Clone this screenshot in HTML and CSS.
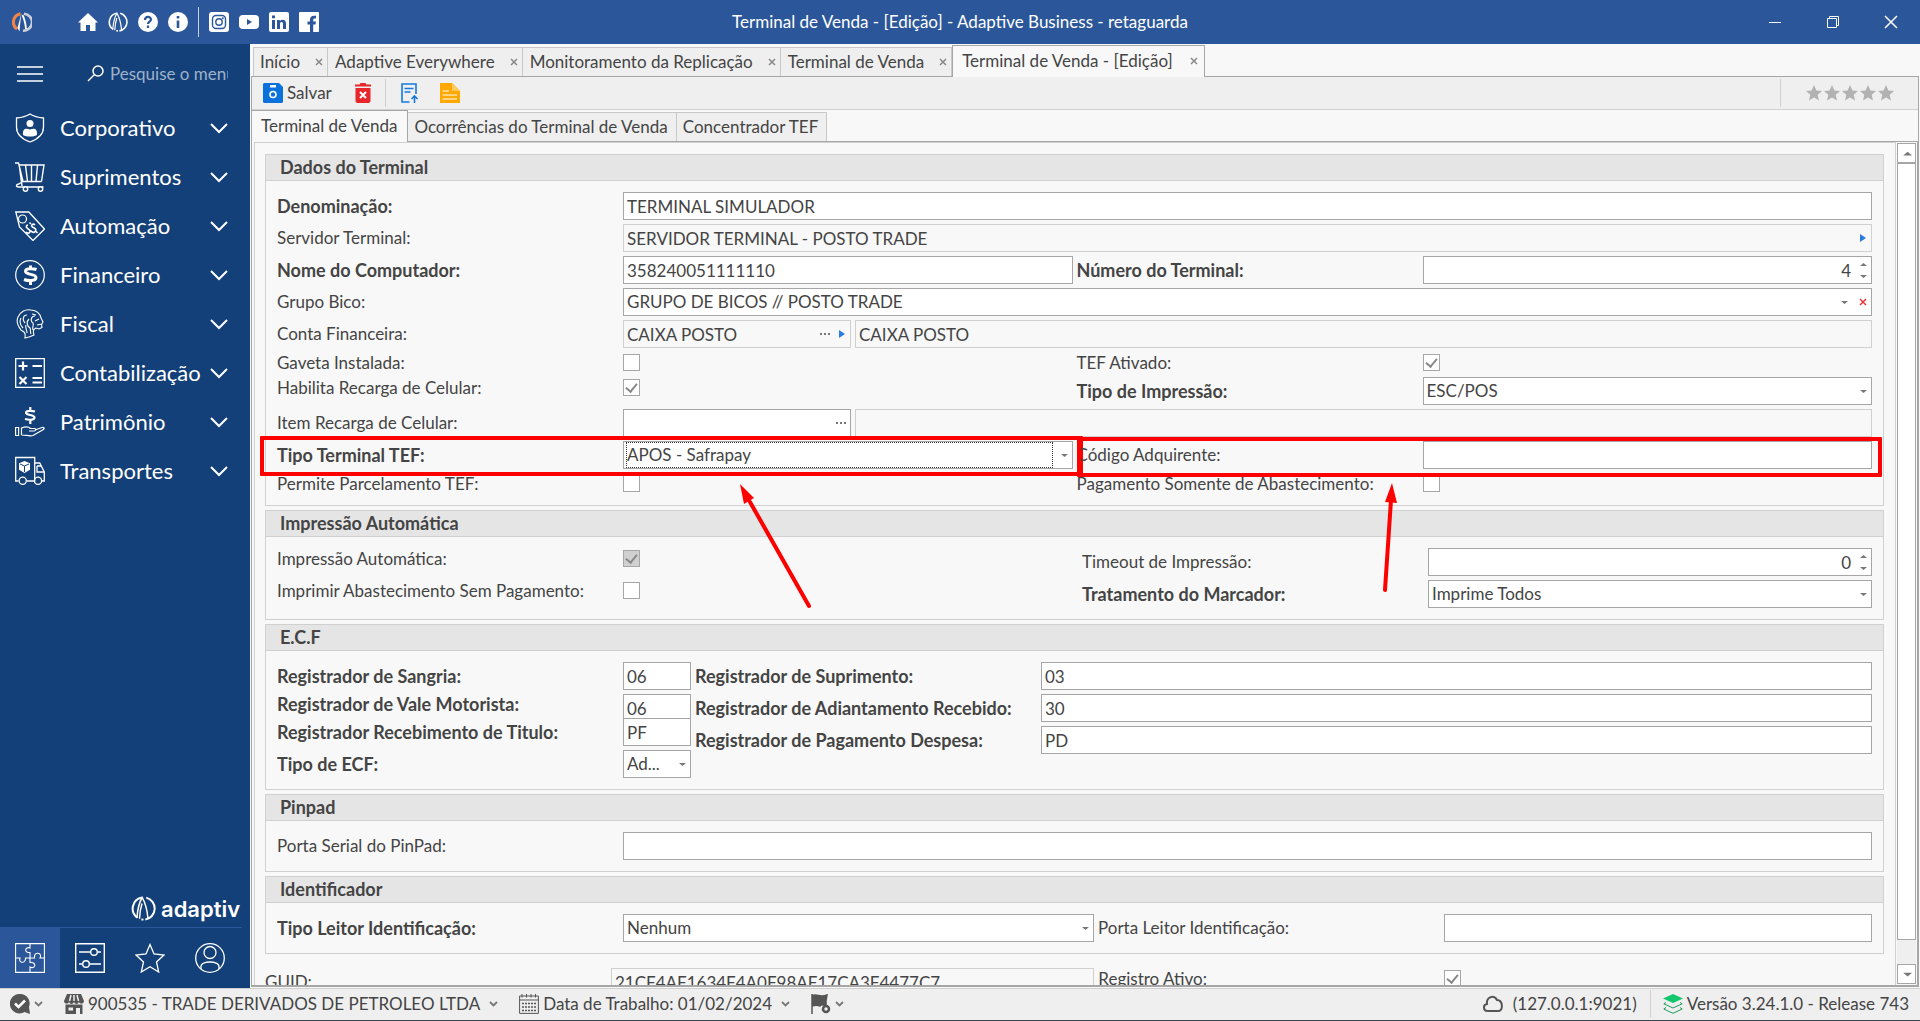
FILE: index.html
```html
<!DOCTYPE html>
<html lang="pt-BR">
<head>
  <meta charset="UTF-8">
  <meta name="viewport" content="width=device-width, initial-scale=1.0">
  <title>Terminal de Venda - [Edição] - Adaptive Business - retaguarda</title>
  <link rel="stylesheet" href="styles.css">
</head>
<body>

<!-- Shared icons -->
<svg class="sprite" aria-hidden="true">
  <symbol id="logo" viewBox="0 0 20 20">
    <path d="M8.6 1.2A9 9 0 0 0 5.2 17.4M12.2 1.3A9 9 0 0 1 11.4 18.9M8.3 18.8L10 18.9" fill="none" stroke="currentColor" stroke-width="1.6"/>
    <path d="M4.8 17.5C5.2 11 6.6 5 9 1.2C11.4 5.5 13 11.500 13.600 18M8.800 6C7.800 9 7 13 6.800 18.200" fill="none" stroke="currentColor" stroke-width="1.200"/>
  </symbol>
  <symbol id="chevron" viewBox="0 0 18 12"><path d="M1 2l8 8 8-8" fill="none" stroke="currentColor" stroke-width="2"/></symbol>
  <symbol id="mini" viewBox="0 0 9 6"><path d="M1 1l3.500 3.500L8 1" fill="none" stroke="currentColor" stroke-width="1.800"/></symbol>
  <symbol id="down" viewBox="0 0 8 8"><path d="M1 3h7L4.500 6z" fill="currentColor"/></symbol>
  <symbol id="up" viewBox="0 0 8 8"><path d="M1 6h7L4.500 3z" fill="currentColor"/></symbol>
  <symbol id="right" viewBox="0 0 8 8"><path d="M1 0v8l6-4z" fill="currentColor"/></symbol>
  <symbol id="x" viewBox="0 0 8 8"><path d="M1 1l6 6M7 1L1 7" stroke="currentColor" stroke-width="1.500"/></symbol>
  <symbol id="dots" viewBox="0 0 10 8"><path d="M0 3h2v2H0zM4 3h2v2H4zM8 3h2v2H8z" fill="currentColor"/></symbol>
  <symbol id="star" viewBox="0 0 16 16"><path d="M8 0l2.400 5.400 5.600.5-4.300 3.800L13 15.500 8 12.500 3 15.500l1.300-5.800L0 5.900l5.600-.5z" fill="currentColor"/></symbol>
</svg>

<header class="titlebar">
  <svg class="app-logo" viewBox="0 0 20 20"><path d="M8.500 1.700A8.500 8.500 0 0 0 5 17" fill="none" stroke="#f58345" stroke-width="3"/><path d="M9.500 1L5.500 16l2 3.500C8 13 8.500 8 9.500 1z" fill="#fff"/><path d="M12 1.700a8.500 8.500 0 0 1-1 17" fill="none" stroke="#c9cfda" stroke-width="2.600"/><path d="M10.500 3c2 4 3 9 3.500 14" fill="none" stroke="#fff" stroke-width="1.800"/></svg>
  <nav class="quick-links">
    <a href="#" title="Home"><svg viewBox="0 0 20 20"><path d="M10 1l10 9.500h-2.500V19H12v-6H8v6H2.500v-8.500H0z" fill="#fff"/></svg></a>
    <a href="#" title="Adaptive"><svg><use href="#logo"/></svg></a>
    <a href="#" title="Ajuda"><svg viewBox="0 0 20 20"><circle cx="10" cy="10" r="10" fill="#fff"/><path d="M7 8c0-4 6-4 6-.5 0 2.200-3 2-3 4.500M10 13.500v2.500" fill="none" stroke="#2b579a" stroke-width="2.200"/></svg></a>
    <a href="#" title="Sobre"><svg viewBox="0 0 20 20"><circle cx="10" cy="10" r="10" fill="#fff"/><path d="M10 4v2.500M10 8.500V16" stroke="#2b579a" stroke-width="2.600"/></svg></a>
    <span class="divider"></span>
    <a href="#" title="Instagram"><svg viewBox="0 0 20 20"><rect width="20" height="20" rx="3" fill="#fff"/><rect x="3.500" y="3.500" width="13" height="13" rx="3.500" fill="none" stroke="#2b579a" stroke-width="1.400"/><circle cx="10" cy="10" r="3.200" fill="none" stroke="#2b579a" stroke-width="1.400"/><circle cx="13.800" cy="6.200" r="1" fill="#2b579a"/></svg></a>
    <a href="#" title="YouTube"><svg viewBox="0 0 20 20"><rect y="3" width="20" height="14" rx="4" fill="#fff"/><path d="M8 7v6l5-3z" fill="#2b579a"/></svg></a>
    <a href="#" title="LinkedIn"><svg viewBox="0 0 20 20"><rect width="20" height="20" rx="2" fill="#fff"/><path d="M3 8h3v9H3zM3 3.500h3v2.700H3zM8 8h2.800v1.300C12.200 7 17 7.200 17 11.500V17h-3v-5c0-2.600-3-2.400-3 0v5H8z" fill="#2b579a"/></svg></a>
    <a href="#" title="Facebook"><svg viewBox="0 0 20 20"><rect width="20" height="20" rx="1" fill="#fff"/><path d="M11 20v-7.500H8.500v-3H11V7.500C11 4.500 13 3.300 17 3.800v2.700c-2-.1-2.800.1-2.800 1.500v1.500H17l-.5 3h-2.300V20z" fill="#2b579a"/></svg></a>
  </nav>
  <h1>Terminal de Venda - [Edição] - Adaptive Business - retaguarda</h1>
  <div class="window-buttons">
    <button title="Minimizar"><svg viewBox="0 0 14 14"><path d="M1 7.500h12" stroke="#fff"/></svg></button>
    <button title="Restaurar"><svg viewBox="0 0 14 14"><path d="M1.500 3.500h9v9h-9zM3.500 3V1.500h9v9H11" fill="none" stroke="#fff"/></svg></button>
    <button title="Fechar"><svg viewBox="0 0 14 14"><path d="M1 1l12 12M13 1L1 13" stroke="#fff" stroke-width="1.500"/></svg></button>
  </div>
</header>

<div class="workspace">
  <aside class="sidebar">
    <div class="sidebar-top">
      <button class="burger" title="Menu"><svg viewBox="0 0 26 16"><path d="M0 1h26M0 8h26M0 15h26" stroke="#fff" stroke-width="1.300"/></svg></button>
      <svg class="lens" viewBox="0 0 17 17"><circle cx="11" cy="6" r="5" fill="none" stroke="#fff" stroke-width="1.500"/><path d="M7.500 9.500L1 16" stroke="#fff" stroke-width="1.500"/></svg>
      <input type="text" placeholder="Pesquise o menu" aria-label="Pesquise o menu">
    </div>
    <nav class="menu">
      <button><svg viewBox="0 0 30 30"><path d="M15 1c4 2.500 8 3.500 13.500 4v9c0 7-5 12-13.500 15C6.500 26 1.500 21 1.500 14V5C7 4.500 11 3.500 15 1z" fill="none" stroke="#fff" stroke-width="1.300"/><circle cx="15" cy="10.500" r="3.500" fill="#fff"/><path d="M8 22c-.5-7 3-7 7-5.500 4-1.500 7.500-1.500 7 5.500-4 2-10 2-14 0z" fill="#fff"/></svg><span>Corporativo</span><svg class="chev"><use href="#chevron"/></svg></button>
      <button><svg viewBox="0 0 30 30"><path d="M0 1h3.500L8 19.500h18.500M3.800 3H29l-2.500 16.500M4.500 5L7 24M8 19.500L3.500 22c-3 1-2.500 3 0 3h25M10.500 3l2 16.500M16.500 3v16.500M22.500 3l-1.500 16.500" fill="none" stroke="#fff" stroke-width="1.400"/><circle cx="10.500" cy="27" r="2.200" fill="#134078" stroke="#fff" stroke-width="1.400"/><circle cx="25.500" cy="27" r="2.200" fill="#134078" stroke="#fff" stroke-width="1.400"/></svg><span>Suprimentos</span><svg class="chev"><use href="#chevron"/></svg></button>
      <button><svg viewBox="0 0 30 30"><path d="M.8 1h13L29.500 18 18 29.500 4.500 16z" fill="none" stroke="#fff" stroke-width="1.300"/><circle cx="7.500" cy="8" r="4" fill="none" stroke="#fff" stroke-width="1.200"/><path d="M20 14c-2-2-4 0-3 1.500s5 2 3.500 4.500-4 1-4.500-.5M16 13l-1.500-1.500M20.500 20l2 2M13 14c-2 0-2 2-1 3s4 2 3 4-3 1-4 0" fill="none" stroke="#fff" stroke-width="1.600"/></svg><span>Automação</span><svg class="chev"><use href="#chevron"/></svg></button>
      <button><svg viewBox="0 0 30 30"><circle cx="15" cy="15" r="14.300" fill="none" stroke="#fff" stroke-width="1.200"/><path d="M21.500 9.500c-2-.8-11-2-11 1.700 0 4 10.500 2.300 10.500 6.300 0 4-8 3.500-12 2M15.500 5.500v4M15.500 20v5" fill="none" stroke="#fff" stroke-width="3"/></svg><span>Financeiro</span><svg class="chev"><use href="#chevron"/></svg></button>
      <button><svg viewBox="0 0 30 30"><path d="M6 21c-3-4-5-9-3-13C5 3 10 0 16 1c5 .5 9 3 10 8l2 4-1.500 2.500.5 3-3 1.500-3-1c-3 1-3 4-2 7-2 1-4 2-9 3 0-3 1-4-1-6zM20 7c-4 0-5 5-2 7 1 2-1 4 0 7M10 14c-3-3-2-8 2-8M6 9c-2 4 0 8 2 10M14 10c-3 3-2 7 1 9 1 2 0 4 1 6M11 16c-1 3 1 5 1 8M17 5l4 1M24 10l-4 2M27 15l-5 1" fill="none" stroke="#fff" stroke-width="1.100"/></svg><span>Fiscal</span><svg class="chev"><use href="#chevron"/></svg></button>
      <button><svg viewBox="0 0 30 30"><path d="M.7.700h28.600v28.600H.7z" fill="none" stroke="#fff" stroke-width="1.300"/><path d="M3.500 8h9M8 3.500v9M17.500 8H27M17.500 20H27M17.500 24.500H27M4.500 19l7 7M11.500 19l-7 7" stroke="#fff" stroke-width="2.200"/></svg><span>Contabilização</span><svg class="chev"><use href="#chevron"/></svg></button>
      <button><svg viewBox="0 0 30 30"><path d="M20 4.500c-2-.6-9-1.500-9 1.200 0 3 8.500 1.600 8.500 4.800 0 3-6 2.500-9.500 1.500M15.300 0v3.500M15.300 13v4" fill="none" stroke="#fff" stroke-width="2.200"/><path d="M.6 20.500h3v8h-3zM6.500 28V21c4-1.500 7-1.500 9 .5h4c2 0 1.500 2.500-.5 2.500h-5M20 23l7-2.500c2-.5 3 1 1 2.200L18 28.500c-3 1-7-.5-11.500-.5" fill="none" stroke="#fff" stroke-width="1.200"/></svg><span>Patrimônio</span><svg class="chev"><use href="#chevron"/></svg></button>
      <button><svg viewBox="0 0 30 30"><path d="M3.500 25H.7V1.500h19V25H12M19.700 7h5l4.600 9v9H27M20 25h-1M22 10v6h7.300M22 10h4" fill="none" stroke="#fff" stroke-width="1.300"/><circle cx="7.700" cy="24.800" r="3.600" fill="none" stroke="#fff" stroke-width="1.300"/><circle cx="23" cy="24.800" r="3.600" fill="none" stroke="#fff" stroke-width="1.300"/><path d="M9.500 5l5.500 2.200v6.500L9.500 17 4 13.700V7.200z" fill="#fff"/><path d="M5 8l4.500 2L14 8M9.500 10v6" fill="none" stroke="#134078"/></svg><span>Transportes</span><svg class="chev"><use href="#chevron"/></svg></button>
    </nav>
    <div class="brand"><svg><use href="#logo"/></svg><span>adaptiv</span></div>
    <div class="side-tabs">
      <button class="active" title="Módulos"><svg viewBox="0 0 30 30"><path d="M.6.600h28.800v28.800H.6zM15 .6V5c-5-2-6 5-1 4.500h1V15M.6 15H5c-2 5 5 6 5.500 1v-1H15M15 15v4.500h1c5-.5 5 6 0 5l-1-.5v5.400M15 15h4.500v-1c-.5-5 7-5 6 0l-.5 1h4.400" fill="none" stroke="#fff" stroke-width="1.100"/></svg></button>
      <button title="Configurações"><svg viewBox="0 0 30 30"><path d="M.7.700h28.600v28.600H.7zM4 9h11.500M22.500 9H26M4 21h3.500M14.500 21H26" fill="none" stroke="#fff" stroke-width="1.400"/><circle cx="19" cy="9" r="3.300" fill="none" stroke="#fff" stroke-width="1.400"/><circle cx="11" cy="21" r="3.300" fill="none" stroke="#fff" stroke-width="1.400"/></svg></button>
      <button title="Favoritos"><svg viewBox="0 0 30 30"><path d="M15 1.500l4 9.500 10 1-7.500 7 2.200 10L15 23.800 6.300 29l2.200-10L1 12l10-1z" fill="none" stroke="#fff" stroke-width="1.300"/></svg></button>
      <button title="Usuário"><svg viewBox="0 0 30 30"><circle cx="15" cy="15" r="14.300" fill="none" stroke="#fff" stroke-width="1.300"/><circle cx="15" cy="9.500" r="6" fill="none" stroke="#fff" stroke-width="1.300"/><path d="M6 26v-2.500c0-6 18-6 18 0V26" fill="none" stroke="#fff" stroke-width="1.300"/></svg></button>
    </div>
  </aside>

  <main class="main">
    <div class="tabs">
      <div class="tab"><a href="#">Início</a><button title="Fechar"><svg><use href="#x"/></svg></button></div>
      <div class="tab"><a href="#">Adaptive Everywhere</a><button title="Fechar"><svg><use href="#x"/></svg></button></div>
      <div class="tab"><a href="#">Monitoramento da Replicação</a><button title="Fechar"><svg><use href="#x"/></svg></button></div>
      <div class="tab"><a href="#">Terminal de Venda</a><button title="Fechar"><svg><use href="#x"/></svg></button></div>
      <div class="tab active"><a href="#">Terminal de Venda - [Edição]</a><button title="Fechar"><svg><use href="#x"/></svg></button></div>
    </div>

    <div class="document">
      <div class="toolbar">
        <button><svg viewBox="0 0 20 20"><path d="M1 0h15l4 4v15l-1 1H1l-1-1V1z" fill="#0b72dc"/><path d="M7 2h6v2.500H7z" fill="#fff"/><circle cx="10" cy="11.500" r="3" fill="none" stroke="#fff" stroke-width="1.600"/></svg>Salvar</button>
        <button title="Excluir"><svg viewBox="0 0 20 20"><path d="M2 1.500h4.500L7.500 0h5l1 1.500H18v2H2zM2.500 5h15v13.500L16 20H4l-1.500-1.500z" fill="#e8272b"/><path d="M7 9l6 6M13 9l-6 6" stroke="#fff" stroke-width="2"/></svg></button>
        <span class="divider"></span>
        <button title="Relatório"><svg viewBox="0 0 20 20"><path d="M10.500 19H3V1h14v10M5.500 5.500h9M5.500 9h6M15.500 20v-6.500M12.500 16l3-3 3 3" fill="none" stroke="#1679dc" stroke-width="1.600"/></svg></button>
        <button title="Notas"><svg viewBox="0 0 20 20"><path d="M0 0h12l8 8v12H0z" fill="#ffa800"/><path d="M12 0l8 8h-8z" fill="#ffc95c"/><path d="M2.500 8H9M2.500 12H17M2.500 16H17" stroke="#fff" stroke-width="1.200"/></svg></button>
        <div class="rating">
          <svg><use href="#star"/></svg><svg><use href="#star"/></svg><svg><use href="#star"/></svg><svg><use href="#star"/></svg><svg><use href="#star"/></svg>
        </div>
      </div>

      <div class="subtabs">
        <a href="#" class="active">Terminal de Venda</a>
        <a href="#">Ocorrências do Terminal de Venda</a>
        <a href="#">Concentrador TEF</a>
      </div>

      <div class="scroll-area">
        <form class="form">
          <section class="group">
            <h2>Dados do Terminal</h2>
            <div class="rows">
              <div class="row">
                <label class="req" for="denominacao">Denominação:</label>
                <div class="field"><input id="denominacao" type="text" value="TERMINAL SIMULADOR"></div>
              </div>
              <div class="row">
                <label for="servidor">Servidor Terminal:</label>
                <div class="field readonly"><input id="servidor" type="text" value="SERVIDOR TERMINAL - POSTO TRADE" readonly><svg class="go"><use href="#right"/></svg></div>
              </div>
              <div class="pair">
                <div class="row">
                  <label class="req" for="computador">Nome do Computador:</label>
                  <div class="field"><input id="computador" type="text" value="358240051111110"></div>
                </div>
                <div class="row">
                  <label class="req" for="numero">Número do Terminal:</label>
                  <div class="field number"><input id="numero" type="text" value="4"><span class="spin"><svg><use href="#up"/></svg><svg><use href="#down"/></svg></span></div>
                </div>
              </div>
              <div class="row">
                <label for="grupo">Grupo Bico:</label>
                <div class="field clearable">
                  <select id="grupo"><option>GRUPO DE BICOS // POSTO TRADE</option></select>
                  <svg><use href="#down"/></svg><svg class="clear"><use href="#x"/></svg>
                </div>
              </div>
              <div class="row">
                <label for="conta">Conta Financeira:</label>
                <div class="lookup">
                  <div class="field readonly"><input id="conta" type="text" value="CAIXA POSTO" readonly><svg class="dots"><use href="#dots"/></svg><svg class="go"><use href="#right"/></svg></div>
                  <div class="field readonly"><input type="text" value="CAIXA POSTO" readonly aria-label="Descrição da conta"></div>
                </div>
              </div>
              <div class="pair">
                <div class="row check">
                  <label for="gaveta">Gaveta Instalada:</label>
                  <input id="gaveta" type="checkbox">
                </div>
                <div class="row check">
                  <label for="tef">TEF Ativado:</label>
                  <input id="tef" type="checkbox" checked>
                </div>
                <div class="row check">
                  <label for="recarga">Habilita Recarga de Celular:</label>
                  <input id="recarga" type="checkbox" checked>
                </div>
                <div class="row">
                  <label class="req" for="impressao">Tipo de Impressão:</label>
                  <div class="field"><select id="impressao"><option>ESC/POS</option></select><svg><use href="#down"/></svg></div>
                </div>
              </div>
              <div class="row">
                <label for="item">Item Recarga de Celular:</label>
                <div class="lookup">
                  <div class="field"><input id="item" type="text"><svg class="dots"><use href="#dots"/></svg></div>
                  <div class="field readonly"><input type="text" readonly aria-label="Descrição do item"></div>
                </div>
              </div>
              <div class="pair">
                <div class="row marked">
                  <label class="req" for="tipo-tef">Tipo Terminal TEF:</label>
                  <div class="field"><select id="tipo-tef" class="focused"><option>APOS - Safrapay</option></select><svg><use href="#down"/></svg></div>
                  <span class="mark mark-left"></span>
                  <svg class="arrow arrow-left" viewBox="0 0 76 128"><path d="M71 124L12 20" stroke="#f00" stroke-width="4" stroke-linecap="round"/><path d="M2 2l14 14-10 6z" fill="#f00"/></svg>
                </div>
                <div class="row marked">
                  <label for="adquirente">Código Adquirente:</label>
                  <div class="field"><input id="adquirente" type="text"></div>
                  <span class="mark mark-right"></span>
                  <svg class="arrow arrow-right" viewBox="0 0 20 112"><path d="M6 108L12 18" stroke="#f00" stroke-width="4" stroke-linecap="round"/><path d="M13 1l5 20-12-1z" fill="#f00"/></svg>
                </div>
                <div class="row check">
                  <label for="parcelamento">Permite Parcelamento TEF:</label>
                  <input id="parcelamento" type="checkbox">
                </div>
                <div class="row check">
                  <label for="abastecimento">Pagamento Somente de Abastecimento:</label>
                  <input id="abastecimento" type="checkbox">
                </div>
              </div>
            </div>
          </section>

          <section class="group">
            <h2>Impressão Automática</h2>
            <div class="rows">
              <div class="pair printing">
                <div class="row check">
                  <label for="auto">Impressão Automática:</label>
                  <input id="auto" type="checkbox" checked disabled>
                </div>
                <div class="row">
                  <label for="timeout">Timeout de Impressão:</label>
                  <div class="field number"><input id="timeout" type="text" value="0"><span class="spin"><svg><use href="#up"/></svg><svg><use href="#down"/></svg></span></div>
                </div>
                <div class="row check">
                  <label for="sem-pagamento">Imprimir Abastecimento Sem Pagamento:</label>
                  <input id="sem-pagamento" type="checkbox">
                </div>
                <div class="row">
                  <label class="req" for="marcador">Tratamento do Marcador:</label>
                  <div class="field"><select id="marcador"><option>Imprime Todos</option></select><svg><use href="#down"/></svg></div>
                </div>
              </div>
            </div>
          </section>

          <section class="group">
            <h2>E.C.F</h2>
            <div class="ecf">
              <div class="rows">
                <div class="row">
                  <label class="req" for="sangria">Registrador de Sangria:</label>
                  <div class="field"><input id="sangria" type="text" value="06"></div>
                </div>
                <div class="row tight">
                  <label class="req" for="vale">Registrador de Vale Motorista:</label>
                  <div class="field"><input id="vale" type="text" value="06"></div>
                </div>
                <div class="row">
                  <label class="req" for="titulo">Registrador Recebimento de Titulo:</label>
                  <div class="field"><input id="titulo" type="text" value="PF"></div>
                </div>
                <div class="row">
                  <label class="req" for="ecf">Tipo de ECF:</label>
                  <div class="field"><select id="ecf"><option>Ad...</option></select><svg><use href="#down"/></svg></div>
                </div>
              </div>
              <div class="rows">
                <div class="row">
                  <label class="req" for="suprimento">Registrador de Suprimento:</label>
                  <div class="field"><input id="suprimento" type="text" value="03"></div>
                </div>
                <div class="row">
                  <label class="req" for="adiantamento">Registrador de Adiantamento Recebido:</label>
                  <div class="field"><input id="adiantamento" type="text" value="30"></div>
                </div>
                <div class="row">
                  <label class="req" for="despesa">Registrador de Pagamento Despesa:</label>
                  <div class="field"><input id="despesa" type="text" value="PD"></div>
                </div>
              </div>
            </div>
          </section>

          <section class="group">
            <h2>Pinpad</h2>
            <div class="rows">
              <div class="row">
                <label for="porta-pinpad">Porta Serial do PinPad:</label>
                <div class="field"><input id="porta-pinpad" type="text"></div>
              </div>
            </div>
          </section>

          <section class="group">
            <h2>Identificador</h2>
            <div class="rows">
              <div class="pair reader">
                <div class="row">
                  <label class="req" for="leitor">Tipo Leitor Identificação:</label>
                  <div class="field"><select id="leitor"><option>Nenhum</option></select><svg><use href="#down"/></svg></div>
                </div>
                <div class="row">
                  <label for="porta-leitor">Porta Leitor Identificação:</label>
                  <div class="field"><input id="porta-leitor" type="text"></div>
                </div>
              </div>
            </div>
          </section>

          <div class="pair footer-row">
            <div class="row">
              <label for="guid">GUID:</label>
              <div class="field readonly"><input id="guid" type="text" value="21CF4AF1634F4A0F98AF17CA3F4477C7" readonly></div>
            </div>
            <div class="row check">
              <label for="ativo">Registro Ativo:</label>
              <input id="ativo" type="checkbox" checked>
            </div>
          </div>
        </form>

        <div class="scrollbar">
          <button type="button" title="Subir"><svg viewBox="0 0 8 8"><use href="#up"/></svg></button>
          <div class="track"><div class="thumb"></div></div>
          <button type="button" title="Descer"><svg viewBox="0 0 8 8"><use href="#down"/></svg></button>
        </div>
      </div>
    </div>
  </main>
</div>

<footer class="statusbar">
  <button class="st-chat" title="Mensagens"><svg class="ico" viewBox="0 0 20 20"><path d="M10 0a9.500 9.500 0 0 1 9 13l1 7-5.500-2A9.700 9.700 0 1 1 10 0z" fill="#555"/><path d="M5 9.500l3.500 3.500L15 6.500" fill="none" stroke="#fff" stroke-width="2.500"/></svg><svg class="mini"><use href="#mini"/></svg></button>
  <button class="st-text"><svg class="ico" viewBox="0 0 20 20"><path d="M3 0h14l3 7c0 3-4 3.500-5 1-1 2.500-4 2.500-5 0-1 2.500-4 2.500-5 0-1 2.500-5 2-5-1z" fill="#555"/><path d="M7 1L5.500 7M13 1l1.500 6M10 1v6" stroke="#efefef" stroke-width="1.500"/><path d="M1.500 10.500h17V20H16v-6h-4v6H1.500z" fill="#555"/><path d="M4.500 13.500h4.500v3H4.500z" fill="#efefef"/></svg>900535 - TRADE DERIVADOS DE PETROLEO LTDA<svg class="mini"><use href="#mini"/></svg></button>
  <button class="st-text"><svg class="ico" viewBox="0 0 20 20"><path d="M.6 2h18.800v17.400H.6zM.6 6h18.800M3 0v3.500M7.500 0v3.500M12 0v3.500M16.500 0v3.500" fill="none" stroke="#555"/><path d="M3 9.500h14M3 13h14M3 16.500h14" stroke="#555" stroke-width="1.600" stroke-dasharray="2 1"/></svg>Data de Trabalho: 01/02/2024<svg class="mini"><use href="#mini"/></svg></button>
  <button class="st-flag" title="Idioma"><svg class="ico" viewBox="0 0 20 20"><path d="M1 0v20M1 2c5-3 7 2 15-1l-1 6v4H10l-1 1C6 11 4 11 1 12z" fill="#555" stroke="#555" stroke-width="1.500"/><circle cx="15" cy="15" r="3" fill="none" stroke="#555" stroke-width="2.500"/></svg><svg class="mini"><use href="#mini"/></svg></button>
  <div class="server"><svg class="cloud" viewBox="0 0 20 18"><path d="M4.500 16C0 16-.2 9.500 4 9c-1-7 7.500-10 10-4 6 0 6.500 11 1.500 11z" fill="none" stroke="#555" stroke-width="2"/></svg>(127.0.0.1:9021)</div>
  <div class="version"><svg class="ico" viewBox="0 0 20 20"><path d="M10 0l10 4.500L10 9 0 4.500z" fill="#12c76c"/><path d="M3 8.500L.8 9.800 10 14l9.200-4.200L17 8.500M3 13.500L.8 15 10 19.300 19.200 15 17 13.500" fill="none" stroke="#1c9d5c"/></svg>Versão 3.24.1.0 - Release 743</div>
</footer>

</body>
</html>
```

FILE: styles.css
```css
* {
  box-sizing: border-box;
}
body {
  margin: 0;
  height: 100vh;
  display: flex;
  flex-direction: column;
  overflow: hidden;
  background: #f8f8f8;
  color: #444;
  font-family: Lato, sans-serif;
  font-size: 17px;
  line-height: 20px;
}
button, input, select {
  margin: 0;
  padding: 0;
  border: 0;
  background: none;
  color: inherit;
  font: inherit;
}
a {
  color: inherit;
  text-decoration: none;
}
svg {
  display: block;
  flex: none;
}
.sprite {
  position: absolute;
  width: 0;
  height: 0;
}

/* Title bar */
.titlebar {
  display: grid;
  grid-template-columns: auto 1fr auto;
  align-items: center;
  position: relative;
  flex: none;
  height: 44px;
  padding-left: 12px;
  background: #2b579a;
  color: #fff;
}
.app-logo {
  width: 20px;
  height: 20px;
}
.quick-links {
  display: flex;
  align-items: center;
  gap: 10px;
  margin-left: 46px;
}
.quick-links svg {
  width: 20px;
  height: 20px;
}
.quick-links .divider {
  width: 1px;
  height: 30px;
  background: #c5d0e2;
}
.titlebar h1 {
  position: absolute;
  left: 0;
  right: 0;
  margin: 0;
  text-align: center;
  font-size: 17px;
  font-weight: normal;
  pointer-events: none;
}
.window-buttons {
  display: flex;
}
.window-buttons button {
  display: flex;
  align-items: center;
  justify-content: center;
  width: 58px;
  height: 44px;
}
.window-buttons svg {
  width: 14px;
  height: 14px;
}

.workspace {
  display: flex;
  flex: 1;
  min-height: 0;
}

/* Sidebar */
.sidebar {
  display: flex;
  flex-direction: column;
  flex: none;
  width: 250px;
  background: #134078;
  color: #fff;
}
.sidebar-top {
  display: flex;
  align-items: center;
  height: 59px;
  padding: 0 22px 0 17px;
}
.burger svg {
  width: 26px;
  height: 16px;
}
.lens {
  width: 17px;
  height: 17px;
  margin: 0 6px 0 44px;
}
.sidebar-top input {
  flex: 1;
  min-width: 0;
}
.sidebar-top input::placeholder {
  color: #9fb2cc;
}
.menu {
  display: flex;
  flex-direction: column;
}
.menu button {
  display: flex;
  align-items: center;
  height: 49px;
  padding: 0 22px 0 15px;
  font-size: 22px;
  text-align: left;
}
.menu svg {
  width: 30px;
  height: 30px;
}
.menu span {
  flex: 1;
  padding-left: 15px;
}
.menu .chev {
  width: 18px;
  height: 12px;
}
.brand {
  display: flex;
  align-items: center;
  gap: 5px;
  height: 38px;
  margin: auto 8px 0 0;
  padding-left: 131px;
  border-bottom: 1px solid #2b579a;
  font-family: Inter, sans-serif;
  font-size: 22px;
  font-weight: 600;
}
.brand svg {
  width: 25px;
  height: 25px;
}
.side-tabs {
  display: grid;
  grid-template-columns: repeat(4, 60px);
  height: 60px;
}
.side-tabs button {
  display: flex;
  align-items: center;
  justify-content: center;
}
.side-tabs .active {
  background: #2b579a;
}
.side-tabs svg {
  width: 30px;
  height: 30px;
}

/* Document tabs */
.main {
  display: flex;
  flex-direction: column;
  flex: 1;
  min-width: 0;
  padding: 1px 1px 0;
}
.tabs {
  display: flex;
  align-items: flex-end;
  height: 31px;
  padding-left: 2px;
}
.tab {
  display: flex;
  align-items: center;
  height: 29px;
  padding: 0 4px 0 7px;
  border: 1px solid #c8c8c8;
  border-bottom: 0;
  border-left-width: 0;
  background: #efefef;
}
.tab:first-child {
  padding-left: 6px;
  border-left-width: 1px;
}
.tab button {
  margin-left: 15px;
  color: #888;
}
.tab svg {
  width: 8px;
  height: 8px;
}
.tab.active {
  position: relative;
  height: 32px;
  margin-bottom: -1px;
  padding: 0 6px 2px 9px;
  border-color: #a6a6a6;
  border-left-width: 1px;
  background: #f8f8f8;
}
.tab.active button {
  margin-left: 17px;
}
.document {
  display: flex;
  flex-direction: column;
  flex: 1;
  min-height: 0;
  margin-bottom: 1px;
  border: 1px solid #a6a6a6;
  border-bottom-width: 2px;
}
.toolbar {
  display: flex;
  align-items: center;
  flex: none;
  height: 33px;
  padding-left: 11px;
  border-bottom: 1px solid #d0d0d0;
  background: #efefef;
}
.toolbar button {
  display: flex;
  gap: 4px;
  margin-right: 21px;
}
.toolbar svg {
  width: 20px;
  height: 20px;
}
.toolbar .divider {
  width: 1px;
  height: 28px;
  margin: 0 13px 0 -9px;
  background: #d0d0d0;
}
.rating {
  display: flex;
  align-items: center;
  gap: 2px;
  height: 28px;
  margin-left: auto;
  padding: 0 24px 0 25px;
  border-left: 1px solid #d0d0d0;
  color: #b2b2b2;
}
.rating svg {
  width: 16px;
  height: 16px;
}
.subtabs {
  display: flex;
  align-items: flex-end;
  flex: none;
  height: 32px;
  border-bottom: 1px solid #a6a6a6;
}
.subtabs a {
  height: 29px;
  padding: 4px 8px 4px 6px;
  border: 1px solid #c8c8c8;
  border-bottom: 0;
  border-left-width: 0;
  background: #efefef;
}
.subtabs .active {
  height: 32px;
  margin-bottom: -1px;
  padding: 5px 10px 5px 9px;
  border-color: #a6a6a6;
  background: #f8f8f8;
}

/* Form */
.scroll-area {
  display: flex;
  flex: 1;
  min-height: 0;
  border-right: 1px solid #a6a6a6;
}
.form {
  flex: 1;
  min-width: 0;
  margin-left: 2px;
  padding: 11px 11px 0 10px;
  border: 1px solid #d0d0d0;
  border-bottom: 0;
  overflow: hidden;
}
.group {
  margin-bottom: 4px;
  border: 1px solid #d0d0d0;
}
.group h2 {
  margin: 0;
  height: 26px;
  padding: 2px 14px;
  border-bottom: 1px solid #d0d0d0;
  background: #e5e5e5;
  font-size: 18px;
  font-weight: bold;
  line-height: 20px;
}
.rows {
  display: flex;
  flex-direction: column;
  gap: 4px;
}
.group > .rows, .ecf {
  padding: 11px;
}
.row {
  display: grid;
  grid-template-columns: 346px 1fr;
  align-items: center;
  min-width: 0;
  height: 28px;
}
.row.check {
  height: 21px;
}
.row.tight {
  grid-template-rows: 20px;
  height: 20px;
}
.row label {
  white-space: nowrap;
}
.row .req {
  font-size: 18px;
  font-weight: bold;
}
.pair {
  display: grid;
  grid-template-columns: 1fr 1fr;
  gap: 4px;
}
.printing {
  grid-template-columns: 801fr 790fr;
}
.reader, .footer-row {
  grid-template-columns: 817fr 774fr;
}
.footer-row {
  padding-top: 10px;
}
.ecf {
  display: grid;
  grid-template-columns: 414px 1fr;
  gap: 4px;
}
.lookup {
  display: grid;
  grid-template-columns: 228px 1fr;
  gap: 4px;
}
.field {
  display: flex;
  align-items: center;
  gap: 8px;
  min-width: 0;
  height: 28px;
  padding: 0 4px 0 3px;
  border: 1px solid #a6a6a6;
  background: #fff;
}
.tight .field {
  align-self: start;
}
.field input, .field select {
  flex: 1;
  min-width: 0;
  height: 24px;
  appearance: none;
  outline: 0;
}
.field svg {
  width: 8px;
  height: 8px;
  color: #777;
}
.field .dots {
  width: 10px;
}
.field .go {
  color: #2b7cdf;
}
.field .clear {
  color: #e33;
}
.field.clearable {
  gap: 11px;
}
.field.readonly {
  border-color: #d0d0d0;
  background: #f8f8f8;
}
.number input {
  text-align: right;
}
.spin {
  display: flex;
  flex-direction: column;
  gap: 4px;
}
.field .focused {
  outline: 1px dotted #333;
}
input[type="checkbox"] {
  display: grid;
  place-items: center;
  width: 17px;
  height: 17px;
  border: 1px solid #a6a6a6;
  background: #fff;
  appearance: none;
}
input[type="checkbox"]:checked::after {
  content: "";
  width: 5px;
  height: 9px;
  margin-bottom: 3px;
  border: solid #888;
  border-width: 0 2px 2px 0;
  transform: rotate(40deg);
}
input[type="checkbox"]:disabled {
  background: #d0d0d0;
}

/* Red callouts */
.marked {
  position: relative;
}
.mark {
  position: absolute;
  border: 4px solid #f00;
  border-radius: 1px;
  pointer-events: none;
}
.mark-left {
  inset: -5px -10px -7px -17px;
}
.mark-right {
  inset: -4px -10px -8px 0;
}
.arrow {
  position: absolute;
  top: 41px;
  pointer-events: none;
}
.arrow-left {
  left: 58%;
  width: 76px;
  height: 128px;
}
.arrow-right {
  left: 38%;
  width: 20px;
  height: 112px;
}

/* Scrollbar */
.scrollbar {
  display: flex;
  flex-direction: column;
  flex: none;
  width: 21px;
  padding: 1px;
  background: #f8f8f8;
}
.scrollbar button {
  display: grid;
  place-items: center;
  height: 20px;
  border: 1px solid #a6a6a6;
  background: #fff;
  color: #777;
}
.scrollbar svg {
  width: 10px;
  height: 10px;
}
.track {
  flex: 1;
  background: #efefef;
}
.thumb {
  height: 97%;
  border: 1px solid #a6a6a6;
  background: #fff;
}

/* Status bar */
.statusbar {
  display: flex;
  align-items: center;
  flex: none;
  height: 33px;
  padding: 0 11px 2px 10px;
  border-top: 1px solid #d0d0d0;
  border-bottom: 1px solid #34465a;
  background: #efefef;
}
.statusbar button, .server, .version {
  display: flex;
  align-items: center;
  gap: 4px;
  white-space: nowrap;
}
.statusbar button {
  margin-right: 21px;
}
.ico {
  width: 20px;
  height: 20px;
}
.mini {
  width: 9px;
  height: 6px;
  color: #777;
}
.st-text .mini {
  margin-left: 5px;
}
.cloud {
  width: 20px;
  height: 18px;
  margin-right: 6px;
}
.server {
  margin-left: auto;
  padding-right: 13px;
}
.version {
  height: 28px;
  padding-left: 12px;
  border-left: 1px solid #d0d0d0;
}
```
